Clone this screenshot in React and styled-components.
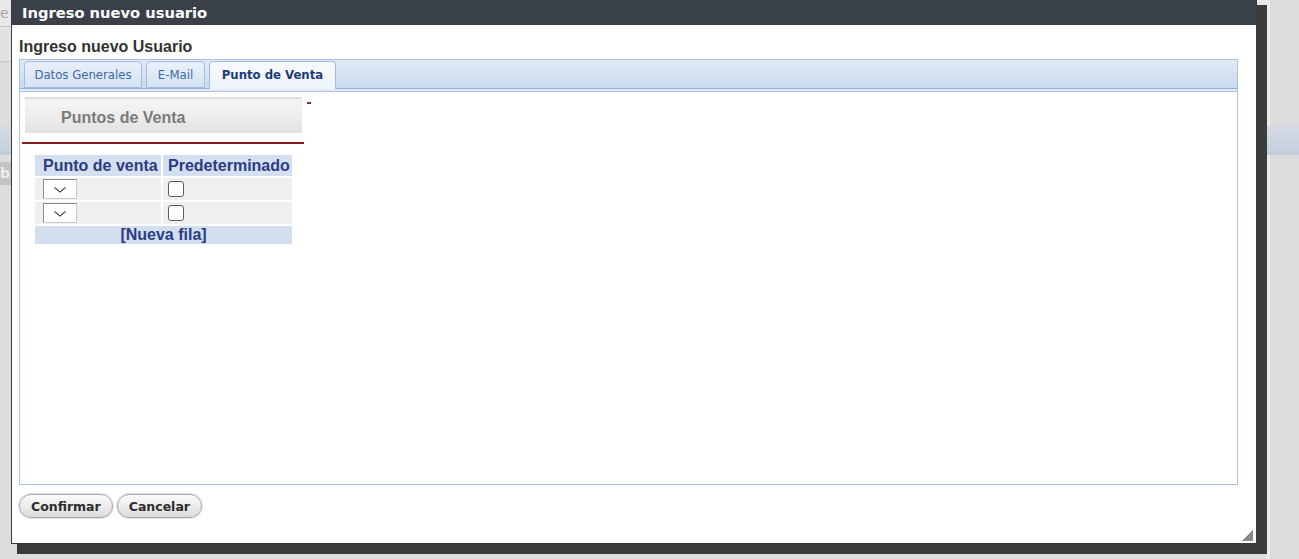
import React from "react";
import styled, { createGlobalStyle } from "styled-components";

const Global = createGlobalStyle`
  html, body { margin: 0; padding: 0; background: #dcdcdc; overflow: hidden; }
  * { box-sizing: border-box; }
`;

const Page = styled.div`
  position: relative;
  width: 100%;
  height: 559px;
  overflow: hidden;
  font-family: "Liberation Sans", Arial, sans-serif;
`;

/* ---------- background page (behind the modal) ---------- */
const Backdrop = styled.div`
  display: flex;
  flex-direction: column;
`;

const FormArea = styled.div`
  width: 1270px;
  border-right: 4px solid #ebebeb;
  display: flex;
  flex-direction: column;
`;

const BgRow = styled.div`
  height: ${(p) => p.$h}px;
  background: ${(p) => p.$bg};
  border-bottom: ${(p) => (p.$line ? "1px solid #c6c6c6" : "none")};
  color: ${(p) => p.$fg || "#a8a8a8"};
  font: ${(p) => (p.$bold ? "bold " : "")}14px "DejaVu Sans", sans-serif;
  line-height: ${(p) => p.$h}px;
`;

const Band = styled.div`
  height: 29px;
  background: linear-gradient(#d6dce6, #c2cddd);
  border-top: 1px solid #cfd5de;
`;

/* ---------- dialog ---------- */
const Dialog = styled.div`
  position: absolute;
  left: 11px;
  top: -1px;
  width: 1246px;
  height: 545px;
  border: 1px solid #3a3a3a;
  background: #fff;
  box-shadow: 8px 8px 0 2px #3b3b3b;
  display: flex;
  flex-direction: column;
`;

const TitleBar = styled.div`
  height: 25px;
  flex: none;
  background: #39404a;
  color: #fff;
  padding-left: 10px;
  font: bold 14.7px/25px "DejaVu Sans", Verdana, sans-serif;
`;

const Body = styled.div`
  flex: 1;
  padding: 0 18px 0 7px;
  display: flex;
  flex-direction: column;
  align-items: flex-start;
  position: relative;
`;

const Heading = styled.div`
  padding-top: 13px;
  margin-bottom: 3px;
  font: bold 16px/18px "Liberation Sans", Arial, sans-serif;
  color: #333;
`;

const Tabs = styled.div`
  align-self: stretch;
  height: 426px;
  border: 1px solid #a9c3e3;
  display: flex;
  flex-direction: column;
`;

const Nav = styled.div`
  height: 29px;
  flex: none;
  display: flex;
  align-items: flex-end;
  gap: 4px;
  padding: 0 0 0 4px;
  background: linear-gradient(#e2eaf6, #c9daf0);
  border-bottom: 1px solid #94b0d7;
`;

const Tab = styled.div`
  width: ${(p) => p.$w}px;
  height: ${(p) => (p.$active ? 28 : 27)}px;
  margin-bottom: ${(p) => (p.$active ? -1 : 0)}px;
  border: 1px solid #a3bde0;
  border-bottom: ${(p) => (p.$active ? "none" : "1px solid #a3bde0")};
  border-radius: 4px 4px 0 0;
  background: ${(p) =>
    p.$active ? "linear-gradient(#f7f9fd, #eef4fb)" : "linear-gradient(#e9f0f9, #d5e3f4)"};
  color: ${(p) => (p.$active ? "#1b3c78" : "#3a6aa3")};
  font: ${(p) => (p.$active ? "bold 13px" : "13px")} "DejaVu Sans Condensed", "DejaVu Sans", sans-serif;
  line-height: 25px;
  text-align: center;
  white-space: nowrap;
  cursor: pointer;
`;

const Strip = styled.div`
  height: 3px;
  flex: none;
  background: #e4ecf7;
  border-bottom: 1px solid #a9c3e3;
`;

const Panel = styled.div`
  flex: 1;
  padding: 5px 0 0 2px;
  display: flex;
  flex-direction: column;
  align-items: flex-start;
`;

const SectionHead = styled.div`
  display: flex;
  align-items: flex-start;
  gap: 5px;
  margin-left: 3px;
`;

const SectionBox = styled.div`
  width: 277px;
  height: 36px;
  background: linear-gradient(#d4d4d4 0, #f4f4f4 3px, #ededed 55%, #e1e1e1 100%);
  color: #7a7a7a;
  font: bold 16px/18px "Liberation Sans", Arial, sans-serif;
  padding: 12px 0 0 36px;
`;

const RedMark = styled.div`
  width: 4px;
  height: 2px;
  margin-top: 5px;
  background: #a0262a;
`;

const RedRule = styled.div`
  width: 282px;
  height: 2px;
  margin-top: 9px;
  background: #861b1f;
`;

const Grid = styled.table`
  margin: 9px 0 0 11px;
  border-collapse: separate;
  border-spacing: 2px;
  font: bold 16px "Liberation Sans", Arial, sans-serif;
`;

const Th = styled.th`
  width: ${(p) => p.$w}px;
  height: 21px;
  padding: 0 0 0 ${(p) => p.$pl}px;
  background: #d4e0ef;
  color: #2b3c85;
  text-align: left;
  font-weight: bold;
  line-height: 21px;
  white-space: nowrap;
`;

const Td = styled.td`
  height: 22px;
  padding: 0 0 0 ${(p) => p.$pl}px;
  background: #efefef;
  vertical-align: middle;
`;

const AddRow = styled.td`
  height: 18px;
  padding: 0;
  background: #d1dfee;
  color: #2b3c85;
  text-align: center;
  line-height: 18px;
  cursor: pointer;
`;

const SelectWrap = styled.span`
  position: relative;
  display: block;
  width: 34px;
  height: 20px;
`;

const Select = styled.select`
  appearance: none;
  width: 34px;
  height: 20px;
  margin: 0;
  display: block;
  background: #fff;
  border: 1px solid #c9c9c9;
  border-top-color: #8a8a8a;
  border-left-color: #8a8a8a;
  border-radius: 0;
`;

const Chevron = styled.svg`
  position: absolute;
  left: 11px;
  top: 8px;
  pointer-events: none;
`;

const Check = styled.input`
  appearance: none;
  display: block;
  width: 16px;
  height: 16px;
  margin: 0;
  border: 1px solid #5f5f5f;
  border-radius: 3px;
  background: #fff;
`;

const Buttons = styled.div`
  display: flex;
  gap: 4px;
  margin-top: 9px;
`;

const Button = styled.button`
  height: 24px;
  padding: 0 11px;
  border: 1px solid #a6a6a6;
  border-radius: 12px;
  background: linear-gradient(#fbfbfb, #e9e9e9 60%, #dcdcdc);
  box-shadow: inset 0 1px 0 #fff, 0 0 0 1px #e6e6e6;
  color: #2d2d2d;
  font: bold 12.5px "DejaVu Sans", Verdana, sans-serif;
  cursor: pointer;
`;

const Grip = styled.svg`
  position: absolute;
  right: 3px;
  bottom: 2px;
`;

function VSelect() {
  return (
    <SelectWrap>
      <Select aria-label="Punto de venta">
        <option value=""></option>
      </Select>
      <Chevron width="12" height="6" viewBox="0 0 12 6">
        <path d="M0.5 0.5 L6 5 L11.5 0.5" fill="none" stroke="#4a4a4a" strokeWidth="1.1" />
      </Chevron>
    </SelectWrap>
  );
}

export default function App() {
  return (
    <Page>
      <Global />
      <Backdrop>
        <FormArea>
          <BgRow $h={27} $bg="#e8e8e8" $line>e</BgRow>
          <BgRow $h={35} $bg="#e2e2e2" $line />
          <BgRow $h={64} $bg="#dddddd" />
        </FormArea>
        <Band />
        <FormArea>
          <BgRow $h={7} $bg="#dddddd" />
          <BgRow $h={23} $bg="#c3c3c3" $fg="#eeeeee" $bold>b</BgRow>
          <BgRow $h={420} $bg="#dddddd" />
        </FormArea>
      </Backdrop>

      <Dialog role="dialog" aria-label="Ingreso nuevo usuario">
        <TitleBar>Ingreso nuevo usuario</TitleBar>
        <Body>
          <Heading>Ingreso nuevo Usuario</Heading>
          <Tabs>
            <Nav>
              <Tab $w={118}>Datos Generales</Tab>
              <Tab $w={59}>E-Mail</Tab>
              <Tab $w={127} $active>Punto de Venta</Tab>
            </Nav>
            <Strip />
            <Panel>
              <SectionHead>
                <SectionBox>Puntos de Venta</SectionBox>
                <RedMark />
              </SectionHead>
              <RedRule />
              <Grid>
                <thead>
                  <tr>
                    <Th $w={126} $pl={8}>Punto de venta</Th>
                    <Th $w={129} $pl={5}>Predeterminado</Th>
                  </tr>
                </thead>
                <tbody>
                  {[0, 1].map((i) => (
                    <tr key={i}>
                      <Td $pl={8}>
                        <VSelect />
                      </Td>
                      <Td $pl={5}>
                        <Check type="checkbox" />
                      </Td>
                    </tr>
                  ))}
                  <tr>
                    <AddRow colSpan={2}>[Nueva fila]</AddRow>
                  </tr>
                </tbody>
              </Grid>
            </Panel>
          </Tabs>
          <Buttons>
            <Button>Confirmar</Button>
            <Button>Cancelar</Button>
          </Buttons>
          <Grip width="11" height="11" viewBox="0 0 11 11">
            <path d="M11 0 L11 11 L0 11 Z" fill="#7a7a7a" />
            <path d="M11 3 L3 11 M11 6 L6 11 M11 9 L9 11" stroke="#b5b5b5" strokeWidth="0.8" />
          </Grip>
        </Body>
      </Dialog>
    </Page>
  );
}
